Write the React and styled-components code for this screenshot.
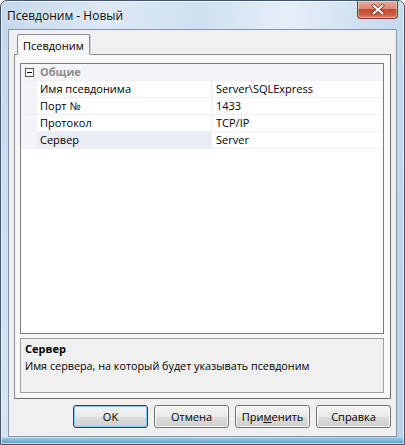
import styled, { createGlobalStyle } from "styled-components";

const GlobalStyle = createGlobalStyle`
  html, body {
    margin: 0;
    padding: 0;
    background: #ffffff;
  }
  body {
    font-family: "Open Sans", "Liberation Sans", sans-serif;
    font-size: 11px;
    color: #000;
  }
`;

const rows = [
  { label: "Имя псевдонима", value: "Server\\SQLExpress" },
  { label: "Порт №", value: "1433" },
  { label: "Протокол", value: "TCP/IP" },
  { label: "Сервер", value: "Server", selected: true },
];

function CloseIcon() {
  return (
    <svg width="14" height="11" viewBox="0 0 14 11">
      <path d="M2.5 1.5 L11.5 9.5 M11.5 1.5 L2.5 9.5" stroke="#6b2418" strokeWidth="3.6" strokeLinecap="round" />
      <path d="M2.5 1.5 L11.5 9.5 M11.5 1.5 L2.5 9.5" stroke="#ffffff" strokeWidth="2.2" strokeLinecap="round" />
    </svg>
  );
}

function MinusBox() {
  return (
    <svg width="9" height="9" viewBox="0 0 9 9">
      <rect x="0.5" y="0.5" width="8" height="8" fill="#fff" stroke="#5a5a5a" />
      <path d="M2 4.5 H7" stroke="#000" />
    </svg>
  );
}

export default function App() {
  return (
    <>
      <GlobalStyle />
      <Window>
        <TitleBar>
          <Title>Псевдоним - Новый</Title>
          <CloseButton>
            <CloseIcon />
          </CloseButton>
        </TitleBar>
        <Client>
          <TabStrip>
            <Tab>Псевдоним</Tab>
          </TabStrip>
          <TabPage>
            <Grid>
              <CategoryRow>
                <Margin>
                  <MinusBox />
                </Margin>
                <CategoryName>Общие</CategoryName>
              </CategoryRow>
              {rows.map((r) => (
                <Row key={r.label}>
                  <Margin />
                  <Label $selected={r.selected}>{r.label}</Label>
                  <Value>{r.value}</Value>
                </Row>
              ))}
            </Grid>
            <Description>
              <DescTitle>Сервер</DescTitle>
              <DescText>Имя сервера, на который будет указывать псевдоним</DescText>
            </Description>
          </TabPage>
          <ButtonRow>
            <Button $default>OK</Button>
            <Button>Отмена</Button>
            <Button>
              При<u>м</u>енить
            </Button>
            <Button>Справка</Button>
          </ButtonRow>
        </Client>
      </Window>
    </>
  );
}

const Window = styled.div`
  width: 405px;
  height: 445px;
  box-sizing: border-box;
  display: flex;
  flex-direction: column;
  border: 1px solid #3f5670;
  border-radius: 7px 7px 0 0;
  background:
    linear-gradient(to bottom, transparent 0, transparent 436px, #8cc0de 438px, #5d9cc6 100%),
    linear-gradient(
      100deg,
      #c3d7ec 0%,
      #dde9f5 22%,
      #cfe0f1 42%,
      #e6eff8 60%,
      #cadcef 80%,
      #b9d1ea 100%
    );
  box-shadow: inset 0 0 0 1px rgba(255, 255, 255, 0.6);
  overflow: hidden;
`;

const TitleBar = styled.div`
  height: 28px;
  display: flex;
  align-items: flex-start;
  padding-left: 6px;
  flex-shrink: 0;
`;

const Title = styled.div`
  margin-top: 6px;
  font-size: 12px;
  color: #0d0d0d;
  text-shadow: 0 0 6px rgba(255, 255, 255, 0.9);
`;

const CloseButton = styled.div`
  margin-left: auto;
  margin-right: 6px;
  width: 41px;
  height: 18px;
  box-sizing: border-box;
  display: flex;
  align-items: center;
  justify-content: center;
  border: 1px solid #7a3a30;
  border-top: none;
  border-radius: 0 0 4px 4px;
  background: linear-gradient(
    to bottom,
    #e7ab9d 0%,
    #d98a78 45%,
    #c24a34 50%,
    #cc5c44 80%,
    #dc8a6c 100%
  );
  box-shadow: inset 0 0 0 1px rgba(255, 255, 255, 0.35);
`;

const Client = styled.div`
  flex: 1;
  margin: 0 7px 7px 7px;
  box-sizing: border-box;
  border: 1px solid #8396ad;
  background: #f0f0f0;
  display: flex;
  flex-direction: column;
  padding: 4px 5px 8px 5px;
`;

const TabStrip = styled.div`
  display: flex;
  padding-left: 3px;
  position: relative;
  z-index: 1;
  margin-bottom: -1px;
`;

const Tab = styled.div`
  height: 21px;
  box-sizing: border-box;
  padding: 3px 5px 0 5px;
  border: 1px solid #898c95;
  border-bottom: 1px solid #f7f7f7;
  border-radius: 2px 2px 0 0;
  background: #f7f7f7;
  font-size: 11px;
  box-shadow: 1px 0 0 #d0d0d0;
`;

const TabPage = styled.div`
  flex: 1;
  box-sizing: border-box;
  border: 1px solid #898c95;
  border-right-color: #6d6d6d;
  border-bottom-color: #6d6d6d;
  background: #f7f7f7;
  display: flex;
  flex-direction: column;
  gap: 4px;
  padding: 8px 6px 5px 5px;
`;

const Grid = styled.div`
  height: 271px;
  box-sizing: border-box;
  border: 1px solid #7a7a7a;
  background: #fff;
  display: flex;
  flex-direction: column;
`;

const RowBase = styled.div`
  display: flex;
  height: 17px;
  box-sizing: border-box;
  border-bottom: 1px solid #eef0f5;
  line-height: 16px;
`;

const CategoryRow = styled(RowBase)`
  background: #f4f5f8;
`;

const Row = styled(RowBase)``;

const Margin = styled.div`
  width: 16px;
  flex-shrink: 0;
  background: #f4f5f8;
  display: flex;
  align-items: center;
  justify-content: center;
  padding-left: 1px;
  box-sizing: border-box;
`;

const CategoryName = styled.div`
  padding-left: 3px;
  font-weight: 700;
  color: #8c8c8c;
`;

const Label = styled.div`
  width: 171px;
  flex-shrink: 0;
  padding-left: 3px;
  border-right: 1px solid #eef0f5;
  background: ${(p) => (p.$selected ? "#e9edf4" : "#fff")};
  white-space: nowrap;
`;

const Value = styled.div`
  flex: 1;
  padding-left: 4px;
  white-space: nowrap;
`;

const Description = styled.div`
  flex: 1;
  box-sizing: border-box;
  border: 1px solid #a0a0a0;
  background: #f0f0f0;
  padding: 2px 4px;
`;

const DescTitle = styled.div`
  font-weight: 700;
  line-height: 15px;
`;

const DescText = styled.div`
  margin-top: 2px;
  line-height: 15px;
  font-size: 10.8px;
`;

const ButtonRow = styled.div`
  display: flex;
  justify-content: flex-end;
  gap: 6px;
  margin-top: 6px;
`;

const Button = styled.div`
  width: 75px;
  height: 23px;
  box-sizing: border-box;
  display: flex;
  align-items: center;
  justify-content: center;
  border: 1px solid ${(p) => (p.$default ? "#3c3c3c" : "#707070")};
  border-radius: 3px;
  background: linear-gradient(to bottom, #f2f2f2 0%, #ebebeb 50%, #dddddd 51%, #cfcfcf 100%);
  box-shadow: inset 0 0 0 1px ${(p) => (p.$default ? "#8ccbe8" : "#fcfcfc")};
  font-size: 11px;

  u {
    text-decoration: underline;
  }
`;
